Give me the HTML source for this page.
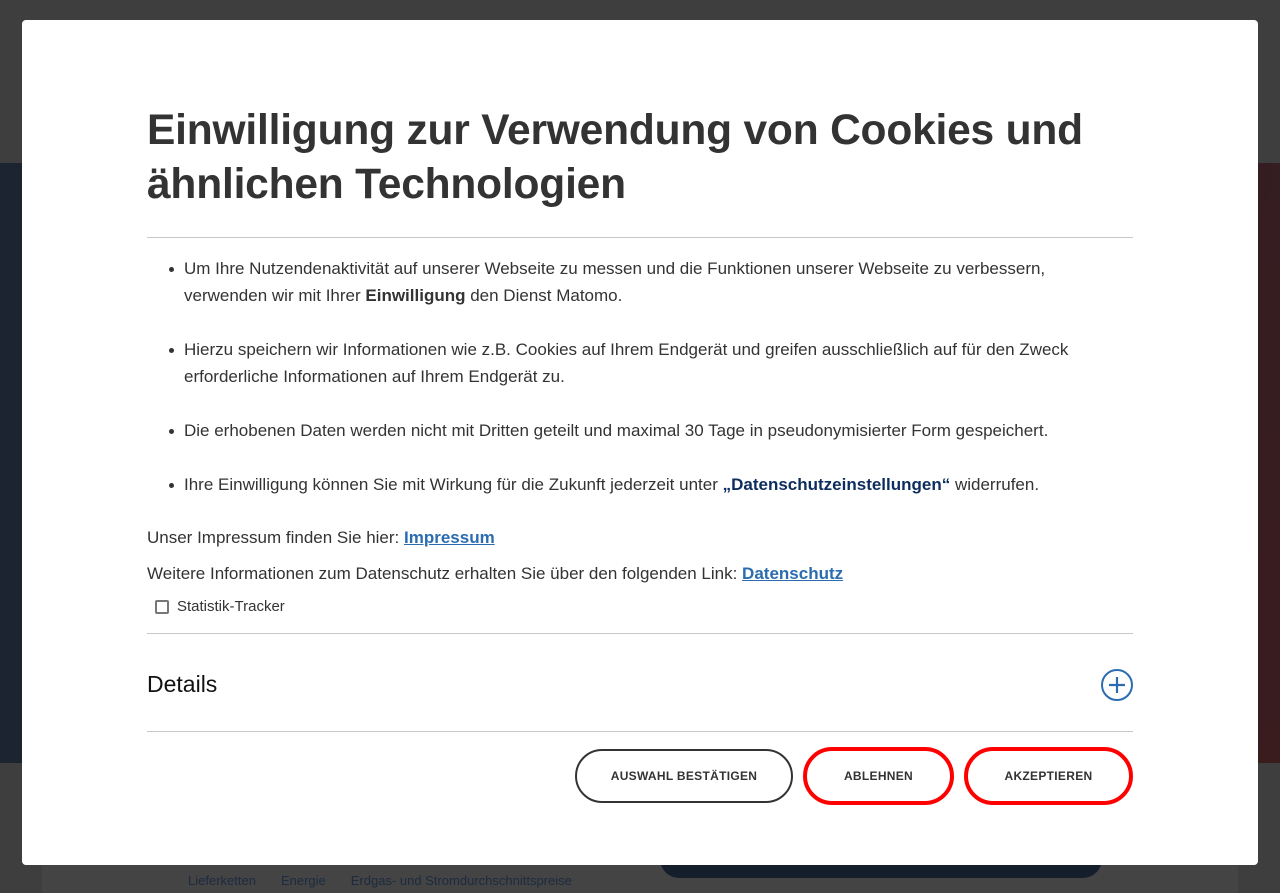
<!DOCTYPE html>
<html><head><meta charset="utf-8"><style>
*{box-sizing:border-box;margin:0;padding:0}
html,body{width:1280px;height:887px;overflow:hidden;background:#3e3e3e;font-family:"Liberation Sans",sans-serif;color:#333}
.band{position:absolute;left:0;top:163px;width:1280px;height:600px;background:linear-gradient(100deg,#1b2430 0%,#1c2330 55%,#3a1c1e 100%)}
.card{position:absolute;left:42px;top:763px;width:1196px;height:130px;background:#444}
.btnbg{position:absolute;left:660px;top:840px;width:442px;height:38px;border-radius:20px;background:#151f2b}
.links{position:absolute;top:873px;left:188px;font-size:13px;color:#1c2b40}
.links span{margin-right:25px}
.modal{position:absolute;left:22px;top:20px;width:1236px;height:845px;background:#fff;border-radius:4px;padding:0 125px}
h1{position:absolute;left:125px;top:84px;width:990px;font-size:42.5px;line-height:54px;font-weight:bold;color:#333;letter-spacing:-0.2px}
.hr{position:absolute;left:125px;width:986px;height:1px;background:#c8c8c8}
ul{position:absolute;left:162px;top:235px;width:940px;list-style:none;font-size:17px;line-height:27px;color:#333}
li{position:relative;margin-bottom:27px}
li:before{content:"";position:absolute;left:-15px;top:12px;width:5px;height:5px;border-radius:50%;background:#333}
a{color:#2b6cb0;font-weight:bold;text-decoration:underline}
.dl{color:#0d2d5e;font-weight:bold}
.p{position:absolute;left:125px;font-size:17px;color:#333}
.cb{position:absolute;left:133px;top:580px;width:14px;height:14px;border:2px solid #777;border-radius:2px}
.cbl{position:absolute;left:155px;top:578px;font-size:15px;color:#333}
.det{position:absolute;left:125px;top:651px;font-size:23px;color:#111}
.plus{position:absolute;left:1078px;top:648px}
.b{position:absolute;top:729px;height:54px;border-radius:27px;display:flex;align-items:center;justify-content:center;font-size:12px;font-weight:bold;letter-spacing:0.3px;color:#333}
</style></head><body>
<div class="band"></div>
<div class="card"></div>
<div class="btnbg"></div>
<div class="links"><span>Lieferketten</span><span>Energie</span><span>Erdgas- und Stromdurchschnittspreise</span></div>
<div class="modal">
<h1>Einwilligung zur Verwendung von Cookies und ähnlichen Technologien</h1>
<div class="hr" style="top:217px"></div>
<ul>
<li>Um Ihre Nutzendenaktivität auf unserer Webseite zu messen und die Funktionen unserer Webseite zu verbessern, verwenden wir mit Ihrer <b>Einwilligung</b> den Dienst Matomo.</li>
<li>Hierzu speichern wir Informationen wie z.B. Cookies auf Ihrem Endgerät und greifen ausschließlich auf für den Zweck erforderliche Informationen auf Ihrem Endgerät zu.</li>
<li>Die erhobenen Daten werden nicht mit Dritten geteilt und maximal 30 Tage in pseudonymisierter Form gespeichert.</li>
<li>Ihre Einwilligung können Sie mit Wirkung für die Zukunft jederzeit unter <span class="dl">„Datenschutzeinstellungen“</span> widerrufen.</li>
</ul>
<div class="p" style="top:508px">Unser Impressum finden Sie hier: <a>Impressum</a></div>
<div class="p" style="top:544px">Weitere Informationen zum Datenschutz erhalten Sie über den folgenden Link: <a>Datenschutz</a></div>
<div class="cb"></div><div class="cbl">Statistik-Tracker</div>
<div class="hr" style="top:613px"></div>
<div class="det">Details</div>
<svg class="plus" width="34" height="34" viewBox="0 0 34 34"><circle cx="17" cy="17" r="15" fill="none" stroke="#2b6cb0" stroke-width="2"/><path d="M17 9v16M9 17h16" stroke="#2b6cb0" stroke-width="2.2"/></svg>
<div class="hr" style="top:711px"></div>
<div class="b" style="left:553px;width:218px;border:2px solid #333">AUSWAHL BESTÄTIGEN</div>
<div class="b" style="left:781px;width:151px;border:4px solid #f00;top:727px;height:58px;border-radius:29px">ABLEHNEN</div>
<div class="b" style="left:942px;width:169px;border:4px solid #f00;top:727px;height:58px;border-radius:29px">AKZEPTIEREN</div>
</div>
</body></html>
